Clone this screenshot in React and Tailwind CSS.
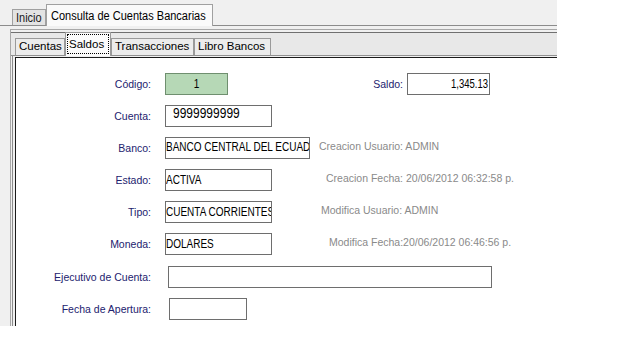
import React from 'react'

const Label = ({ children, w = 'w-[135px]' }) => (
  <div className={`${w} shrink-0 text-right text-[10.5px] leading-[12px] text-[#22226e]`}>{children}</div>
)

const Field = ({ w, children, className = 'bg-white border-[#6e6e6e]' }) => (
  <div className={`${w} h-[22px] shrink-0 border flex items-start overflow-hidden leading-[11px] ${className}`}>
    {children}
  </div>
)

const FieldText = ({ children, className = 'text-[10px]' }) => (
  <span className={`block origin-top scale-y-[1.3] whitespace-nowrap leading-[11px] text-black ${className}`}>
    {children}
  </span>
)

const Info = ({ children, ml }) => (
  <div className={`${ml} self-start pt-[3px] text-[10.5px] leading-[12px] text-[#8a8a8a] whitespace-nowrap`}>{children}</div>
)

const App = () => {
  return (
    <div className="w-[557px] h-[326px] bg-[#f0f0f0] overflow-hidden flex flex-col font-['Liberation_Sans',Arial,sans-serif]">
      {/* top tabs */}
      <div className="h-[26px] shrink-0 flex items-end pl-[12px] border-b border-[#8c8c8c]">
        <div className="h-[16px] w-[34px] pl-[3px] bg-[#e3e3e3] border border-b-0 border-[#a0a0a0] text-[11px] leading-[13px] text-[#1a1a1a]">
          <span className="block origin-top scale-y-[1.15]">Inicio</span>
        </div>
        <div className="h-[22px] w-[167px] -mb-px pl-[4px] pt-[3px] bg-[#fafafa] border border-b-0 border-[#a0a0a0] text-[11px] leading-[13px] text-black">
          <span className="block origin-top scale-y-[1.15]">Consulta de Cuentas Bancarias</span>
        </div>
      </div>

      <div className="flex-1 flex flex-col ml-[10px] mt-[3px] border-l border-t border-[#a8a8a8] pt-[2px]">
        {/* inner tabs */}
        <div className="h-[24px] shrink-0 flex items-end pl-[4px] bg-[#e8e8e8] border-t border-b border-t-[#707070] border-b-[#909090] text-[11.5px] text-black">
          <div className="h-[17px] w-[50px] pl-[3px] bg-[#ececec] border border-b-0 border-[#9a9a9a] leading-[15px]">Cuentas</div>
          <div className="h-[24px] w-[46px] -mb-px p-px bg-[#fbfbfb] border border-b-0 border-[#9a9a9a]">
            <div className="h-[20px] w-[42px] pl-px pt-[3px] border border-dotted border-black leading-[13px]">Saldos</div>
          </div>
          <div className="h-[17px] w-[83px] pl-[3px] bg-[#ececec] border border-b-0 border-[#9a9a9a] leading-[15px]">Transacciones</div>
          <div className="h-[17px] w-[77px] pl-[3px] bg-[#ececec] border border-b-0 border-[#9a9a9a] leading-[15px]">Libro Bancos</div>
        </div>

        {/* panel */}
        <div className="flex-1 flex flex-col ml-px border-l border-[#8c8c8c] pl-[2px] pt-[1px]">
          <div className="flex-1 bg-white border-l border-t border-[#1a1a1a] pt-[15px] flex flex-col gap-[10px]">
            <div className="flex items-center">
              <Label>Código:</Label>
              <Field w="w-[63px] ml-[14px]" className="bg-[#b6d8b6] border-[#6f8f6f] justify-center pt-[2px]">
                <FieldText>1</FieldText>
              </Field>
              <Label w="w-[175px]">Saldo:</Label>
              <Field w="w-[83px] ml-[4px]" className="bg-white border-[#6e6e6e] justify-end pr-px pt-[2px]">
                <FieldText className="text-[9.5px]">1,345.13</FieldText>
              </Field>
            </div>

            <div className="flex items-center">
              <Label>Cuenta:</Label>
              <Field w="w-[107px] ml-[14px]" className="bg-white border-[#6e6e6e] pl-[7px]">
                <span className="block origin-top scale-y-[1.15] text-[12px] leading-[12px] text-black">9999999999</span>
              </Field>
            </div>

            <div className="flex items-center">
              <Label>Banco:</Label>
              <Field w="w-[145px] ml-[14px]" className="bg-white border-[#6e6e6e] pt-px">
                <FieldText>BANCO CENTRAL DEL ECUADOR</FieldText>
              </Field>
              <Info ml="ml-[9px]">Creacion Usuario: ADMIN</Info>
            </div>

            <div className="flex items-center">
              <Label>Estado:</Label>
              <Field w="w-[107px] ml-[14px]" className="bg-white border-[#6e6e6e] pt-[2px]">
                <FieldText>ACTIVA</FieldText>
              </Field>
              <Info ml="ml-[54px]">Creacion Fecha: 20/06/2012 06:32:58 p.</Info>
            </div>

            <div className="flex items-center">
              <Label>Tipo:</Label>
              <Field w="w-[107px] ml-[14px]" className="bg-white border-[#6e6e6e] pt-[2px]">
                <FieldText>CUENTA CORRIENTES</FieldText>
              </Field>
              <Info ml="ml-[49px]">Modifica Usuario: ADMIN</Info>
            </div>

            <div className="flex items-center">
              <Label>Moneda:</Label>
              <Field w="w-[107px] ml-[14px]" className="bg-white border-[#6e6e6e] pt-[2px]">
                <FieldText>DOLARES</FieldText>
              </Field>
              <Info ml="ml-[57px]">Modifica Fecha:20/06/2012 06:46:56 p.</Info>
            </div>

            <div className="flex items-center mt-px">
              <Label>Ejecutivo de Cuenta:</Label>
              <Field w="w-[324px] ml-[17px]" />
            </div>

            <div className="flex items-center">
              <Label>Fecha de Apertura:</Label>
              <Field w="w-[78px] ml-[18px]" />
            </div>
          </div>
        </div>
      </div>
    </div>
  )
}

export default App
